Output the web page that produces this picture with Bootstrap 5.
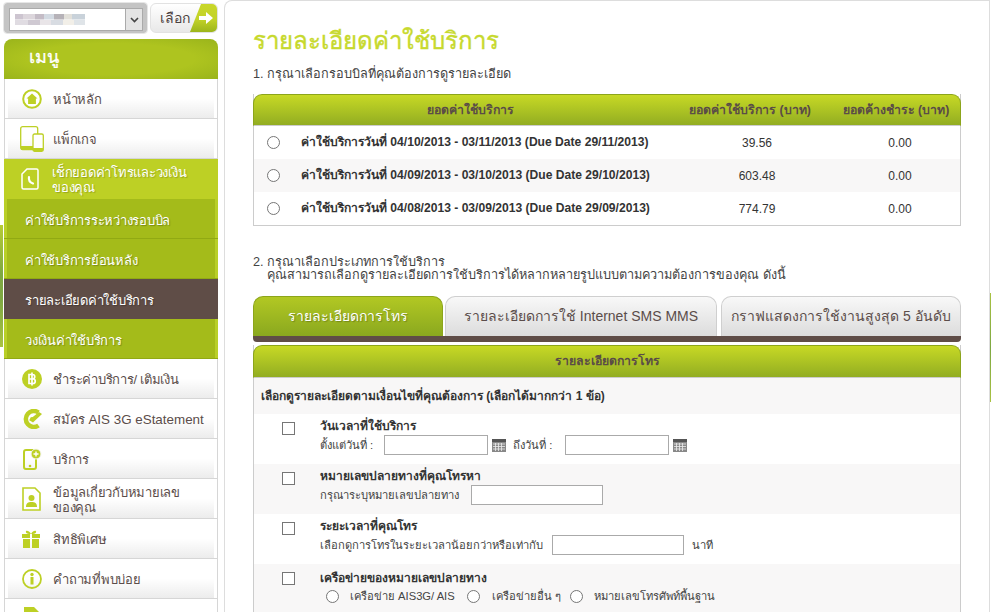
<!DOCTYPE html>
<html lang="th">
<head>
  <meta charset="UTF-8">
  <meta name="viewport" content="width=device-width, initial-scale=1">
  <title>รายละเอียดค่าใช้บริการ</title>
  <link href="https://cdn.jsdelivr.net/npm/bootstrap@5.3.0/dist/css/bootstrap.min.css" rel="stylesheet">
  <style>
    html, body { height: 612px; overflow: hidden; }
    body { font-family: "Liberation Sans", "Noto Sans", sans-serif; font-size: 12px; color: #333; background: #fff; }
    .page-wrap {
      width: 991px; height: 612px;
      background:
        linear-gradient(#b7cc35, #7ea842 40%, #7ea842 60%, #a9c242) 0 225px / 3px 122px no-repeat,
        linear-gradient(#a9c242, #7ea842 50%, #a9c242) 990px 293px / 1px 109px no-repeat;
    }

    /* sidebar */
    .side-col { width: 224px; padding: 3px 6px 0 4px; flex: none; }
    .acct-box { height: 30px; background: #c4c4c4; border-radius: 3px; width: 143px; padding: 5px 4px 2px 5px; outline: 1px solid #e6e6e6; }
    .acct-select { background: #fff; border: 1px solid #aaa; height: 23px; }
    .acct-blur {
      width: 70px; height: 11px; margin-left: 5px;
      background:
        linear-gradient(90deg, #cdc5d0 0 12%, #dcd6dc 12% 28%, #c4bcc6 28% 42%, #d3dae2 42% 56%, #b6b2b8 56% 70%, #e2e0da 70% 82%, #c9d2da 82% 100%) top / 100% 50% no-repeat,
        linear-gradient(90deg, #e0dce2 0 18%, #cfc9d2 18% 36%, #e9e5e8 36% 52%, #d8dce2 52% 68%, #f2efe8 68% 84%, #dfe4e8 84% 100%) bottom / 100% 50% no-repeat;
    }
    .acct-arrow { width: 17px; background: #e4e4e4; border-left: 1px solid #aaa; }
    .pick-btn { width: 68px; height: 30px; margin-left: 3px; background: linear-gradient(#fff, #e8e8e8); border: 1px solid #e2e2e2; border-radius: 6px; color: #4b4140; font-size: 14px; overflow: hidden; }
    .pick-label { padding-left: 9px; }
    .pick-arrow { width: 27px; height: 100%; background: linear-gradient(#c9d72a, #c2d228 55%, #9cb51b); clip-path: polygon(11px 0, 100% 0, 100% 100%, 0 100%); }
    .menu-head { height: 40px; margin-top: 6px; padding: 0 0 4px 25px; background: radial-gradient(ellipse at center, #aec41f 55%, #9ab41b 100%); border-radius: 8px 8px 0 0; color: #fff; font-size: 18px; -webkit-text-stroke: .3px #fff; }
    .menu-row { height: 40px; border: 1px solid #d6d6d6; border-top: 0; padding: 0 3px; color: #5b4d4a; font-size: 13px; letter-spacing: -.25px; line-height: 15px; background: #fff; }
    .menu-inner { height: 100%; background: linear-gradient(#fff 50%, #ececec); }
    .menu-inner > span { margin-top: 2px; }
    .menu-ico { width: 45px; flex: none; padding-left: 14px; }
    .menu-ico.ico-wide { padding-left: 12px; }
    .latin-part { font-size: 13.4px; letter-spacing: 0; }
    .menu-row.on-green { background: #bdd025; border: 0; color: #fff; text-shadow: 1px 1px 1px rgba(0,0,0,.2); }
    .menu-row.on-green .menu-inner { background: none; }
    .menu-row.sub-green { background: #b9cf28; border: 0; border-bottom: 1px solid #91a913; color: #fff; text-shadow: 1px 1px 1px rgba(0,0,0,.25); }
    .menu-row.sub-green .menu-inner { background: #a4bb1a; padding: 4px 0 0 18px; }
    .menu-row.sub-now { background: #5f4d47; border: 0; color: #fff; padding: 2px 0 0 21px; text-shadow: 1px 1px 1px rgba(0,0,0,.25); }

    /* main */
    .main-col { flex: 1; background: #fff; border: 1px solid #ddd; border-bottom: 0; border-radius: 8px 0 0 0; margin-right: 1px; padding: 0 28px; }
    .page-title { color: #c7d92d; font-size: 24px; line-height: 32px; margin: 24px 0 0; font-weight: 400; -webkit-text-stroke: .4px #c7d92d; }
    .step-text { color: #444; font-size: 12.7px; line-height: 13px; }
    .step-one { margin: 11px 0 13px; }
    .step-two { margin-top: 30px; }
    .green-head { background: linear-gradient(#c7d925, #92ad22); border: 1px solid #8ca51b; border-bottom: 0; color: #5a4c47; font-size: 12.3px; font-weight: 700; }
    .bill-table { border: 1px solid #ccc; border-top: 0; }
    .bill-head { height: 32px; margin: 0 -1px; border-radius: 9px 9px 0 0; border-bottom: 1px solid #ccc; }
    .head-name { width: 432px; text-align: center; }
    .head-amt { width: 128px; text-align: center; }
    .head-due { flex: 1; padding-left: 18px; text-align: center; }
    .bill-row { height: 33px; color: #333; }
    .bill-row:nth-child(even) { background: #f8f7f7; }
    .col-radio { width: 47px; flex: none; padding-left: 13px; }
    .col-name { width: 387px; flex: none; font-size: 12.1px; font-weight: 700; }
    .col-amt { width: 138px; flex: none; text-align: center; }
    .col-due { flex: 1; padding-left: 14px; text-align: center; }
    .page-radio.form-check-input { width: 13px; height: 13px; margin: 0; border: 1px solid #767676; flex: none; }
    .page-check.form-check-input { width: 13px; height: 13px; margin: 0; border: 1px solid #767676; border-radius: 0; flex: none; }

    .tab-strip { height: 40px; margin-top: 14px; gap: 2px; }
    .tab-item { height: 40px; border-radius: 10px 10px 0 0; font-size: 14px; white-space: nowrap; background: linear-gradient(#f8f8f8, #dcdcdc); border: 1px solid #cfcfcf; border-bottom: 0; color: #5b4d4a; }
    .tab-item.now { width: 190px; background: linear-gradient(#b2c823, #8aa81f); border-color: #8ca51b; color: #fff; text-shadow: 1px 1px 1px rgba(0,0,0,.25); }
    .tab-b { width: 272px; }
    .tab-c { width: 240px; margin-left: 2px; }
    .tab-bar { height: 6px; background: #5f4d47; border-radius: 0 0 4px 4px; }
    .call-panel { margin-top: 3px; border-left: 1px solid #ccc; border-right: 1px solid #ccc; }
    .call-head { height: 33px; border-radius: 9px 9px 0 0; margin: 0 -1px; border-bottom: 1px solid #ccc; }
    .call-note { height: 36px; padding-left: 7px; background: #f8f7f7; font-weight: 700; color: #333; }
    .call-row { height: 50px; }
    .call-row:nth-child(even) { background: #f8f7f7; }
    .row-tick { width: 66px; flex: none; padding: 8px 0 0 28px; }
    .row-title { font-weight: 700; line-height: 13px; margin-top: 6px; color: #333; }
    .call-row:last-child .row-title { margin-top: 8px; }
    .row-line { height: 20px; margin-top: 2px; color: #444; font-size: 11.2px; }
    .call-row:last-child .row-line { margin-top: 1px; }
    .page-box { height: 20px; border: 1px solid #aaa; background: #fff; padding: 0 3px; }
    .w-date { width: 104px; }
    .w-num { width: 132px; }
    .cal-ico { width: 16px; height: 16px; flex: none; margin-left: 3px; }
    .from-label { margin-right: 11px; }
    .to-label { margin: 0 13px 0 6px; }
    .gap-dest { margin-right: 12px; }
    .gap-dur { margin-right: 9px; }
    .gap-unit { margin-left: 8px; }
    .page-radio.form-check-input.net-first { margin-left: 6px; }
    .net-a { margin: 0 12px 0 11px; }
    .net-b { margin: 0 9px 0 12px; }
    .net-c { margin-left: 11px; }
  </style>
</head>
<body>
<div class="page-wrap d-flex">

  <!-- เมนูด้านซ้าย -->
  <div class="side-col">
    <div class="d-flex">
      <div class="acct-box">
        <div class="acct-select d-flex align-items-center justify-content-between">
          <div class="acct-blur"></div>
          <div class="acct-arrow h-100 d-flex align-items-center justify-content-center">
            <svg width="9" height="6" viewBox="0 0 9 6"><path d="M1 1l3.5 3.5L8 1" fill="none" stroke="#444" stroke-width="1.6"/></svg>
          </div>
        </div>
      </div>
      <div class="pick-btn d-flex align-items-center justify-content-between">
        <span class="pick-label">เลือก</span>
        <div class="pick-arrow d-flex align-items-center justify-content-end pe-1">
          <svg width="14" height="12" viewBox="0 0 14 12"><path d="M0 4h7V0l7 6-7 6V8H0z" fill="#fff"/></svg>
        </div>
      </div>
    </div>

    <div class="menu-head d-flex align-items-center">เมนู</div>

    <div class="menu-row"><div class="menu-inner d-flex align-items-center">
      <div class="menu-ico"><svg width="20" height="20" viewBox="0 0 20 20"><circle cx="10" cy="10" r="8.8" fill="#fff" stroke="#bdd025" stroke-width="2"/><path d="M10 4.500l5.500 5h-1.600V15H6.100V9.500H4.500z" fill="#bdd025"/></svg></div>
      <span>หน้าหลัก</span>
    </div></div>
    <div class="menu-row"><div class="menu-inner d-flex align-items-center">
      <div class="menu-ico ico-wide"><svg width="24" height="26" viewBox="0 0 24 26"><rect x=".7" y=".7" width="17" height="23" rx="2" fill="none" stroke="#bdd025" stroke-width="1.300"/><rect x="1" y="20" width="12" height="4" fill="#bdd025"/><rect x="13" y="8" width="10.300" height="17.300" rx="1.500" fill="#fff" stroke="#bdd025" stroke-width="1.300"/><rect x="13" y="22" width="10" height="3" fill="#bdd025"/></svg></div>
      <span>แพ็กเกจ</span>
    </div></div>
    <div class="menu-row on-green"><div class="menu-inner d-flex align-items-center">
      <div class="menu-ico"><svg width="18" height="22" viewBox="0 0 18 22"><path d="M6 1h9.500A1.500 1.500 0 0117 2.500v17a1.500 1.500 0 01-1.500 1.500h-13A1.500 1.500 0 011 19.500V6z" fill="none" stroke="#fff" stroke-width="1.500"/><path d="M8 9c-.5 3 1 5.500 4 6.500" fill="none" stroke="#fff" stroke-width="2.200" stroke-linecap="round"/></svg></div>
      <span>เช็กยอดค่าโทรและวงเงิน<br>ของคุณ</span>
    </div></div>
    <div class="menu-row sub-green"><div class="menu-inner d-flex align-items-center">ค่าใช้บริการระหว่างรอบบิล</div></div>
    <div class="menu-row sub-green"><div class="menu-inner d-flex align-items-center">ค่าใช้บริการย้อนหลัง</div></div>
    <div class="menu-row sub-now d-flex align-items-center">รายละเอียดค่าใช้บริการ</div>
    <div class="menu-row sub-green"><div class="menu-inner d-flex align-items-center">วงเงินค่าใช้บริการ</div></div>
    <div class="menu-row"><div class="menu-inner d-flex align-items-center">
      <div class="menu-ico"><svg width="20" height="20" viewBox="0 0 20 20"><circle cx="10" cy="10" r="10" fill="#bdd025"/><path d="M7 5.500h3.500a2.200 2.200 0 010 4.500H7zm0 4.500h4a2.200 2.200 0 010 4.500H7zM10 3.500v13" fill="none" stroke="#fff" stroke-width="1.700"/></svg></div>
      <span>ชำระค่าบริการ/ เติมเงิน</span>
    </div></div>
    <div class="menu-row"><div class="menu-inner d-flex align-items-center">
      <div class="menu-ico"><svg width="21" height="20" viewBox="0 0 21 20"><path d="M16.500 3.500a8 8 0 100 13" fill="none" stroke="#bdd025" stroke-width="4.500"/><path d="M7 11l10-8 3 2-9 8.500z" fill="#bdd025"/><circle cx="10" cy="10" r="2" fill="#bdd025"/></svg></div>
      <span>สมัคร <span class="latin-part">AIS 3G eStatement</span></span>
    </div></div>
    <div class="menu-row"><div class="menu-inner d-flex align-items-center">
      <div class="menu-ico"><svg width="20" height="22" viewBox="0 0 20 22"><rect x="2" y="2" width="12" height="19" rx="2" fill="none" stroke="#bdd025" stroke-width="2"/><circle cx="8" cy="18" r="1.300" fill="#bdd025"/><circle cx="14" cy="6" r="5" fill="#bdd025" stroke="#f7f7f7"/><path d="M14 3.500v5M11.500 6h5" stroke="#fff" stroke-width="1.400"/></svg></div>
      <span>บริการ</span>
    </div></div>
    <div class="menu-row"><div class="menu-inner d-flex align-items-center">
      <div class="menu-ico"><svg width="19" height="24" viewBox="0 0 19 24"><path d="M1 1h12l5 5v17H1z" fill="#fff" stroke="#bdd025" stroke-width="1.600"/><circle cx="9.500" cy="11" r="3" fill="#bdd025"/><path d="M4 20c0-4 2-5 5.500-5s5.500 1 5.500 5z" fill="#bdd025"/></svg></div>
      <span>ข้อมูลเกี่ยวกับหมายเลข<br>ของคุณ</span>
    </div></div>
    <div class="menu-row"><div class="menu-inner d-flex align-items-center">
      <div class="menu-ico"><svg width="18" height="18" viewBox="0 0 18 18"><rect x="0" y="4" width="8" height="4" fill="#bdd025"/><rect x="10" y="4" width="8" height="4" fill="#bdd025"/><rect x="1" y="9" width="7" height="9" fill="#bdd025"/><rect x="10" y="9" width="7" height="9" fill="#bdd025"/><path d="M9 4C7 0 3 0 4 2.500 4.500 4 7 4 9 4zm0 0c2-4 6-4 5-1.500C13.500 4 11 4 9 4z" fill="#bdd025"/></svg></div>
      <span>สิทธิพิเศษ</span>
    </div></div>
    <div class="menu-row"><div class="menu-inner d-flex align-items-center">
      <div class="menu-ico"><svg width="20" height="20" viewBox="0 0 20 20"><circle cx="10" cy="10" r="9" fill="none" stroke="#bdd025" stroke-width="1.800"/><rect x="8.500" y="8" width="3" height="7.500" fill="#bdd025"/><circle cx="10" cy="5.500" r="1.700" fill="#bdd025"/></svg></div>
      <span>คำถามที่พบบ่อย</span>
    </div></div>
    <div class="menu-row"><div class="menu-inner d-flex align-items-center">
      <div class="menu-ico"><svg width="18" height="24" viewBox="0 0 18 24"><path d="M2 0h10l5 5v18H2z" fill="#bdd025"/></svg></div>
    </div></div>
  </div>

  <!-- เนื้อหาหลัก -->
  <div class="main-col">
    <h1 class="page-title">รายละเอียดค่าใช้บริการ</h1>
    <div class="step-text step-one">1. กรุณาเลือกรอบบิลที่คุณต้องการดูรายละเอียด</div>

    <div class="bill-table">
      <div class="bill-head green-head d-flex align-items-center">
        <div class="head-name">ยอดค่าใช้บริการ</div>
        <div class="head-amt">ยอดค่าใช้บริการ (บาท)</div>
        <div class="head-due">ยอดค้างชำระ (บาท)</div>
      </div>
      <div>
        <div class="bill-row d-flex align-items-center">
          <div class="col-radio"><input class="form-check-input page-radio d-block" type="radio" name="bill"></div>
          <div class="col-name">ค่าใช้บริการวันที่ 04/10/2013 - 03/11/2013 (Due Date 29/11/2013)</div>
          <div class="col-amt">39.56</div>
          <div class="col-due">0.00</div>
        </div>
        <div class="bill-row d-flex align-items-center">
          <div class="col-radio"><input class="form-check-input page-radio d-block" type="radio" name="bill"></div>
          <div class="col-name">ค่าใช้บริการวันที่ 04/09/2013 - 03/10/2013 (Due Date 29/10/2013)</div>
          <div class="col-amt">603.48</div>
          <div class="col-due">0.00</div>
        </div>
        <div class="bill-row d-flex align-items-center">
          <div class="col-radio"><input class="form-check-input page-radio d-block" type="radio" name="bill"></div>
          <div class="col-name">ค่าใช้บริการวันที่ 04/08/2013 - 03/09/2013 (Due Date 29/09/2013)</div>
          <div class="col-amt">774.79</div>
          <div class="col-due">0.00</div>
        </div>
      </div>
    </div>

    <div class="step-text step-two">2. กรุณาเลือกประเภทการใช้บริการ<br>&nbsp;&nbsp;&nbsp;&nbsp;คุณสามารถเลือกดูรายละเอียดการใช้บริการได้หลากหลายรูปแบบตามความต้องการของคุณ ดังนี้</div>

    <div class="tab-strip d-flex">
      <div class="tab-item now d-flex align-items-center justify-content-center">รายละเอียดการโทร</div>
      <div class="tab-item tab-b d-flex align-items-center justify-content-center">รายละเอียดการใช้ Internet SMS MMS</div>
      <div class="tab-item tab-c d-flex align-items-center justify-content-center">กราฟแสดงการใช้งานสูงสุด 5 อันดับ</div>
    </div>
    <div class="tab-bar"></div>

    <div class="call-panel">
      <div class="call-head green-head d-flex align-items-center justify-content-center">รายละเอียดการโทร</div>
      <div class="call-note d-flex align-items-center">เลือกดูรายละเอียดตามเงื่อนไขที่คุณต้องการ (เลือกได้มากกว่า 1 ข้อ)</div>
      <div>
        <div class="call-row d-flex">
          <div class="row-tick"><input class="form-check-input page-check d-block" type="checkbox"></div>
          <div>
            <div class="row-title">วันเวลาที่ใช้บริการ</div>
            <div class="row-line d-flex align-items-center">
              <span class="from-label">ตั้งแต่วันที่ :</span>
              <div class="page-box w-date"></div>
              <svg class="cal-ico" viewBox="0 0 16 16"><rect x="1" y="2" width="14" height="13" fill="#888"/><rect x="1" y="2" width="14" height="3" fill="#555"/><path d="M2 7h12M2 9.500h12M2 12h12M4.500 6v8M7.500 6v8M10.500 6v8" stroke="#eee" stroke-width=".8"/></svg>
              <span class="to-label">ถึงวันที่ :</span>
              <div class="page-box w-date"></div>
              <svg class="cal-ico" viewBox="0 0 16 16"><rect x="1" y="2" width="14" height="13" fill="#888"/><rect x="1" y="2" width="14" height="3" fill="#555"/><path d="M2 7h12M2 9.500h12M2 12h12M4.500 6v8M7.500 6v8M10.500 6v8" stroke="#eee" stroke-width=".8"/></svg>
            </div>
          </div>
        </div>
        <div class="call-row d-flex">
          <div class="row-tick"><input class="form-check-input page-check d-block" type="checkbox"></div>
          <div>
            <div class="row-title">หมายเลขปลายทางที่คุณโทรหา</div>
            <div class="row-line d-flex align-items-center">
              <span class="gap-dest">กรุณาระบุหมายเลขปลายทาง</span>
              <div class="page-box w-num"></div>
            </div>
          </div>
        </div>
        <div class="call-row d-flex">
          <div class="row-tick"><input class="form-check-input page-check d-block" type="checkbox"></div>
          <div>
            <div class="row-title">ระยะเวลาที่คุณโทร</div>
            <div class="row-line d-flex align-items-center">
              <span class="gap-dur">เลือกดูการโทรในระยะเวลาน้อยกว่าหรือเท่ากับ</span>
              <div class="page-box w-num"></div>
              <span class="gap-unit">นาที</span>
            </div>
          </div>
        </div>
        <div class="call-row d-flex">
          <div class="row-tick"><input class="form-check-input page-check d-block" type="checkbox"></div>
          <div>
            <div class="row-title">เครือข่ายของหมายเลขปลายทาง</div>
            <div class="row-line d-flex align-items-center">
              <input class="form-check-input page-radio net-first" type="radio" name="net"><span class="net-a">เครือข่าย AIS3G/ AIS</span>
              <input class="form-check-input page-radio" type="radio" name="net"><span class="net-b">เครือข่ายอื่น ๆ</span>
              <input class="form-check-input page-radio" type="radio" name="net"><span class="net-c">หมายเลขโทรศัพท์พื้นฐาน</span>
            </div>
          </div>
        </div>
      </div>
    </div>
  </div>
</div>
<script src="https://cdn.jsdelivr.net/npm/bootstrap@5.3.0/dist/js/bootstrap.bundle.min.js"></script>
</body>
</html>
